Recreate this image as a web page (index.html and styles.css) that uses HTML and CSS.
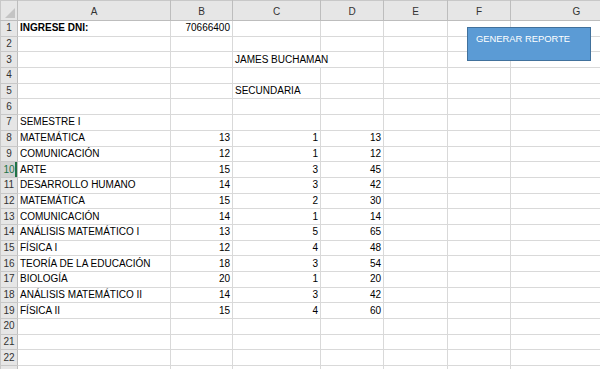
FILE: index.html
```html
<!DOCTYPE html>
<html lang="es">
<head>
	<meta charset="UTF-8">
	<title>Reporte</title>
	<link rel="stylesheet" href="styles.css">
</head>
<body>
	<div id="wrap">
		<table class="sheet">
			<colgroup>
				<col class="c-hd">
				<col class="c-a">
				<col class="c-b">
				<col class="c-c">
				<col class="c-d">
				<col class="c-e">
				<col class="c-f">
				<col class="c-g">
			</colgroup>
			<tr class="letters">
				<th class="corner"><span></span></th>
				<th>A</th><th>B</th><th>C</th><th>D</th><th>E</th><th>F</th><th>G</th>
			</tr>
			<tr><th>1</th><td class="bold">INGRESE DNI:</td><td class="num">70666400</td><td></td><td></td><td></td><td></td><td></td></tr>
			<tr><th>2</th><td></td><td></td><td></td><td></td><td></td><td></td><td></td></tr>
			<tr><th>3</th><td></td><td></td><td colspan="2" class="span">JAMES BUCHAMAN</td><td></td><td></td><td></td></tr>
			<tr><th>4</th><td></td><td></td><td></td><td></td><td></td><td></td><td></td></tr>
			<tr><th>5</th><td></td><td></td><td>SECUNDARIA</td><td></td><td></td><td></td><td></td></tr>
			<tr><th>6</th><td></td><td></td><td></td><td></td><td></td><td></td><td></td></tr>
			<tr><th>7</th><td>SEMESTRE I</td><td></td><td></td><td></td><td></td><td></td><td></td></tr>
			<tr><th>8</th><td>MATEMÁTICA</td><td class="num">13</td><td class="num">1</td><td class="num">13</td><td></td><td></td><td></td></tr>
			<tr><th>9</th><td>COMUNICACIÓN</td><td class="num">12</td><td class="num">1</td><td class="num">12</td><td></td><td></td><td></td></tr>
			<tr><th class="on">10</th><td>ARTE</td><td class="num">15</td><td class="num">3</td><td class="num">45</td><td></td><td></td><td></td></tr>
			<tr><th>11</th><td>DESARROLLO HUMANO</td><td class="num">14</td><td class="num">3</td><td class="num">42</td><td></td><td></td><td></td></tr>
			<tr><th>12</th><td>MATEMÁTICA</td><td class="num">15</td><td class="num">2</td><td class="num">30</td><td></td><td></td><td></td></tr>
			<tr><th>13</th><td>COMUNICACIÓN</td><td class="num">14</td><td class="num">1</td><td class="num">14</td><td></td><td></td><td></td></tr>
			<tr><th>14</th><td>ANÁLISIS MATEMÁTICO I</td><td class="num">13</td><td class="num">5</td><td class="num">65</td><td></td><td></td><td></td></tr>
			<tr><th>15</th><td>FÍSICA I</td><td class="num">12</td><td class="num">4</td><td class="num">48</td><td></td><td></td><td></td></tr>
			<tr><th>16</th><td>TEORÍA DE LA EDUCACIÓN</td><td class="num">18</td><td class="num">3</td><td class="num">54</td><td></td><td></td><td></td></tr>
			<tr><th>17</th><td>BIOLOGÍA</td><td class="num">20</td><td class="num">1</td><td class="num">20</td><td></td><td></td><td></td></tr>
			<tr><th>18</th><td>ANÁLISIS MATEMÁTICO II</td><td class="num">14</td><td class="num">3</td><td class="num">42</td><td></td><td></td><td></td></tr>
			<tr><th>19</th><td>FÍSICA II</td><td class="num">15</td><td class="num">4</td><td class="num">60</td><td></td><td></td><td></td></tr>
			<tr><th>20</th><td></td><td></td><td></td><td></td><td></td><td></td><td></td></tr>
			<tr><th>21</th><td></td><td></td><td></td><td></td><td></td><td></td><td></td></tr>
			<tr><th>22</th><td></td><td></td><td></td><td></td><td></td><td></td><td></td></tr>
			<tr><th></th><td></td><td></td><td></td><td></td><td></td><td></td><td></td></tr>
		</table>
		<div class="btn">GENERAR REPORTE</div>
	</div>
</body>
</html>
```

FILE: styles.css
```css
* {
	margin: 0;
	padding: 0;
	box-sizing: border-box;
}
body {
	background: #fff;
	overflow: hidden;
	font-family: "Liberation Sans", Arial, sans-serif;
	font-size: 10px;
	color: #000;
}
#wrap {
	position: relative;
	width: 600px;
	height: 369px;
	overflow: hidden;
}
.sheet {
	border-collapse: collapse;
	table-layout: fixed;
	width: 642px;
}
.c-hd { width: 17px; }
.c-a { width: 153px; }
.c-b { width: 62px; }
.c-c { width: 88px; }
.c-d { width: 63px; }
.c-e { width: 64px; }
.c-f { width: 63px; }
.c-g { width: 132px; }
.sheet tr {
	height: 15.7px;
}
.sheet tr.letters {
	height: 20px;
}
.sheet td {
	border: 1px solid #d9d9d9;
	padding: 0 2px;
	white-space: nowrap;
	overflow: hidden;
	line-height: 14px;
}
.sheet td.span {
	overflow: visible;
}
.sheet td.num {
	text-align: right;
}
.sheet td.bold {
	font-weight: bold;
}
.sheet th {
	background: #e6e6e6;
	color: #333;
	font-weight: normal;
	font-size: 10px;
	border: 1px solid #c8c8c8;
	border-right-color: #bdbdbd;
	text-align: center;
	line-height: 14px;
}
.letters th {
	border-bottom-color: #bdbdbd;
	padding-top: 3px;
}
.corner {
	position: relative;
}
.corner span {
	position: absolute;
	right: 2px;
	bottom: 2px;
	width: 0;
	height: 0;
	border-left: 10px solid transparent;
	border-bottom: 10px solid #c4c4c4;
}
.sheet th.on {
	background: #d2d2d2;
	color: #217346;
	box-shadow: inset -2px 0 0 #217346;
}
.btn {
	position: absolute;
	left: 467px;
	top: 27px;
	width: 124px;
	height: 34px;
	background: #5b9bd5;
	border: 1px solid #41719c;
	color: #fff;
	font-size: 9.4px;
	padding: 5px 0 0 8px;
}
```
